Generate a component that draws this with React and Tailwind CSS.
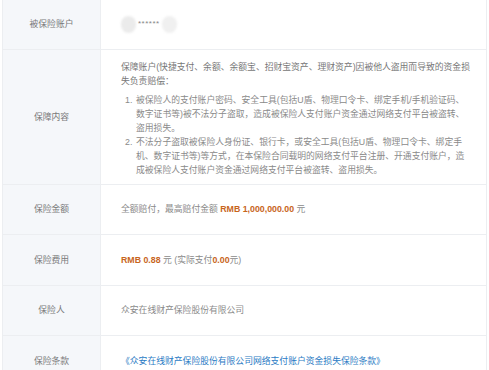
import React from "react";

const font = { fontFamily: '"Liberation Sans", "Noto Sans CJK SC", sans-serif' };

// 一行：左边标签，右边内容
function Row({ label, children, h, last }) {
  return (
    <div className={`grid grid-cols-[98px_1fr] ${last ? "" : "border-b border-[#eceef1]"}`}>
      <div className={`flex items-center justify-center bg-[#f5f7fa] border-r border-[#eceef1] text-[#7a7a7a] ${h}`}>
        {label}
      </div>
      <div className="flex items-center pl-[20px] pr-[14px] text-[#8a8a8a]">{children}</div>
    </div>
  );
}

export default function App() {
  return (
    <div className="w-[489px] h-[370px] overflow-hidden bg-white" style={font}>
      <div className="ml-[2px] w-[485px] border-x border-[#eceef1] text-[8.8px] leading-[13px]">
        <Row label="被保险账户" h="h-[49px]">
          <div className="flex items-center">
            <span className="w-[15px] h-[17px] rounded-full bg-[#ebebeb] blur-[1px]" />
            <span className="px-[2px] text-[8px] text-[#888] tracking-[0.5px] -mt-[2px]">******</span>
            <span className="w-[15px] h-[17px] rounded-full bg-[#f0f0f0] blur-[1px]" />
          </div>
        </Row>

        <Row label="保障内容" h="h-[134px]">
          <div className="pt-[10px] pb-[7px] self-start leading-[14px]">
            <p className="text-[#777]">
              保障账户(快捷支付、余额、余额宝、招财宝资产、理财资产)因被他人盗用而导致的资金损失负责赔偿：
            </p>
            <ol className="pl-[4px] mt-[5px]">
              <li className="flex">
                <span className="w-[11px] shrink-0">1.</span>
                <span>
                  被保险人的支付账户密码、安全工具(包括U盾、物理口令卡、绑定手机/手机验证码、数字证书等)被不法分子盗取，造成被保险人支付账户资金通过网络支付平台被盗转、盗用损失。
                </span>
              </li>
              <li className="flex">
                <span className="w-[11px] shrink-0">2.</span>
                <span>
                  不法分子盗取被保险人身份证、银行卡，或安全工具(包括U盾、物理口令卡、绑定手机、数字证书等)等方式，在本保险合同载明的网络支付平台注册、开通支付账户，造成被保险人支付账户资金通过网络支付平台被盗转、盗用损失。
                </span>
              </li>
            </ol>
          </div>
        </Row>

        <Row label="保险金额" h="h-[49px]">
          <span>
            全额赔付，最高赔付金额 <b className="text-[#c8651d]">RMB 1,000,000.00</b> 元
          </span>
        </Row>

        <Row label="保险费用" h="h-[50px]">
          <span>
            <b className="text-[#c8651d]">RMB 0.88</b> 元 (实际支付<b className="text-[#c8651d]">0.00</b>元)
          </span>
        </Row>

        <Row label="保险人" h="h-[49px]">
          <span>众安在线财产保险股份有限公司</span>
        </Row>

        <Row label="保险条款" h="h-[50px]" last>
          <a href="#" className="text-[#2b7bc4]">
            《众安在线财产保险股份有限公司网络支付账户资金损失保险条款》
          </a>
        </Row>
      </div>
    </div>
  );
}
